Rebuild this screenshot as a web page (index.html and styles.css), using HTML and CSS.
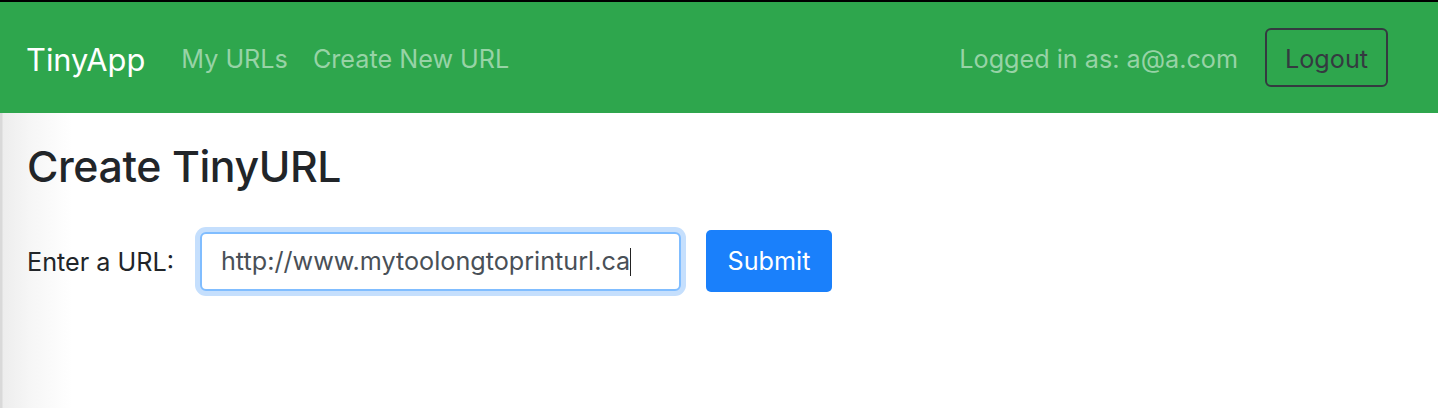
FILE: index.html
```html
<!DOCTYPE html>
<html lang="en">
<head>
<meta charset="utf-8">
<title>TinyApp</title>
<link rel="stylesheet" href="styles.css">
</head>
<body>
<nav class="navbar">
  <div class="nav-left">
    <a class="brand" href="#">TinyApp</a>
    <a class="nav-link" href="#">My URLs</a>
    <a class="nav-link" href="#">Create New URL</a>
  </div>
  <div class="nav-right">
    <span class="nav-text">Logged in as: a@a.com</span>
    <button class="btn-logout" type="button">Logout</button>
  </div>
</nav>
<main class="content">
  <h2 class="title">Create TinyURL</h2>
  <form class="url-form">
    <label class="form-label" for="longURL">Enter a URL:</label>
    <div class="input-wrap">
      <input id="longURL" class="url-input" type="text" value="http://www.mytoolongtoprinturl.ca"><span class="caret"></span>
    </div>
    <button class="btn-submit" type="button">Submit</button>
  </form>
</main>
</body>
</html>
```
FILE: styles.css
```css
* { box-sizing: border-box; }
html, body { margin: 0; padding: 0; height: 100%; }
body {
  font-family: Inter, "Noto Sans", "Liberation Sans", sans-serif;
  color: #212529;
  background: linear-gradient(to right, #d9d9d9 0, #d9d9d9 2px, #ededed 3px, #f6f6f6 30px, #ffffff 72px);
  border-top: 2px solid #000;
}
.navbar {
  background: #2ea64d;
  height: 111px;
  display: flex;
  align-items: center;
  justify-content: space-between;
  padding: 0 50px 0 26px;
}
.nav-left, .nav-right { display: flex; align-items: center; }
.nav-left { padding-top: 3px; }
.brand {
  color: #fff;
  text-decoration: none;
  font-size: 30.8px;
  margin-right: 36px;
}
.nav-link {
  color: #97d3a6;
  text-decoration: none;
  font-size: 25.2px;
  margin-right: 25px;
}
.nav-text {
  color: #97d3a6;
  font-size: 25.2px;
  margin-right: 27px;
  padding-top: 3px;
}
.btn-logout {
  font-family: inherit;
  font-size: 25.2px;
  color: #343a40;
  background: transparent;
  border: 2px solid #343a40;
  border-radius: 6px;
  width: 123px;
  height: 59px;
  padding: 2px 0 0;
}
.content { padding: 0 27px; }
.title {
  margin: 0;
  padding-top: 30px;
  font-size: 42.8px;
  font-weight: 500;
  line-height: 48px;
  letter-spacing: -0.4px;
}
.url-form {
  display: flex;
  align-items: center;
  margin-top: 39px;
}
.form-label {
  font-size: 25.2px;
  margin-right: 26px;
  padding-top: 2px;
}
.input-wrap { position: relative; }
.url-input {
  display: block;
  width: 481px;
  height: 59px;
  border: 2px solid #80bdff;
  border-radius: 6px;
  box-shadow: 0 0 0 5px #c5dffd;
  outline: none;
  padding: 0 19px;
  font-family: inherit;
  font-size: 25.2px;
  color: #495057;
}
.caret {
  position: absolute;
  left: 430px;
  top: 16px;
  width: 1px;
  height: 28px;
  background: #222;
}
.btn-submit {
  margin-left: 25px;
  width: 126px;
  height: 62px;
  border: none;
  border-radius: 5px;
  background: #1a80fb;
  color: #fff;
  font-family: inherit;
  font-size: 25.2px;
  padding: 0;
}
```
